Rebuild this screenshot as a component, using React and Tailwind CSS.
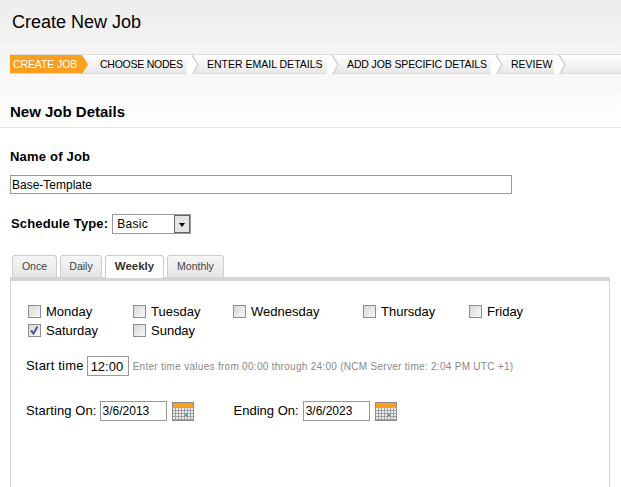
const steps = [
  { label: 'CHOOSE NODES', width: 'w-[107px] tracking-[-0.25px]' },
  { label: 'ENTER EMAIL DETAILS', width: 'w-[140px]' },
  { label: 'ADD JOB SPECIFIC DETAILS', width: 'w-[164px] tracking-[-0.12px]' },
  { label: 'REVIEW', width: 'w-[63px]' },
];

const tabs = [
  { label: 'Once', width: 'w-[45px]' },
  { label: 'Daily', width: 'w-[42px]' },
  { label: 'Weekly', width: 'w-[59px]', active: true },
  { label: 'Monthly', width: 'w-[57px]' },
];

const days = [
  { label: 'Monday' },
  { label: 'Tuesday' },
  { label: 'Wednesday' },
  { label: 'Thursday' },
  { label: 'Friday' },
  { label: 'Saturday', checked: true },
  { label: 'Sunday' },
];

function Chevron() {
  return (
    <svg width="12" height="19" viewBox="0 0 12 19" className="absolute right-[-11px] top-0">
      <path d="M0 0 L5 0 L11 9.5 L5 19 L0 19 Z" fill="#fdfdfd" />
      <path d="M5 0 L11 9.5 L6 19" fill="none" stroke="#d2d2d2" strokeWidth="1.5" />
    </svg>
  );
}

function Checkbox({ checked }) {
  return (
    <span className="flex h-[13px] w-[13px] shrink-0 items-center justify-center border border-[#8e8e8e] bg-gradient-to-br from-[#d8d8d8] to-[#f8f8f8] p-0">
      {checked && (
        <svg width="11" height="11" viewBox="0 0 11 11">
          <path d="M2 5.5 L4.5 8.5 L8.5 1.5" fill="none" stroke="#4a5a9a" strokeWidth="2" />
        </svg>
      )}
    </span>
  );
}

function CalendarIcon() {
  return (
    <svg width="22" height="19" viewBox="0 0 22 19" className="block shrink-0">
      <rect x="0.5" y="0.5" width="21" height="18" fill="#ededed" stroke="#8c8c8c" />
      <rect x="1" y="1" width="20" height="5" fill="#f7a11e" />
      <path
        d="M1 8.5 H21 M1 11.5 H21 M1 14.5 H21 M1 17.5 H21 M3.5 6 V18 M6.5 6 V18 M9.5 6 V18 M12.5 6 V18 M15.5 6 V18 M18.5 6 V18"
        fill="none"
        stroke="#a0a0a0"
      />
      <rect x="13" y="12" width="2" height="2" fill="#2aa8e0" />
    </svg>
  );
}

export default function App() {
  return (
    <div className="h-[487px] w-[621px] overflow-hidden bg-white font-['Liberation_Sans',Arial,sans-serif] text-black">
      <div className="h-[128px] border-b border-[#e6e6e6] bg-gradient-to-b from-[#ededed] to-white">
        <h1 className="pl-[12px] pt-[11px] text-[18px] leading-[22px] font-normal">Create New Job</h1>

        {/* Wizard steps */}
        <div className="mt-[21px] ml-[10px] flex h-[20px] items-stretch whitespace-nowrap border-y border-[#dcdcdc] bg-gradient-to-b from-white to-[#e8e8e8] text-[10.5px] leading-[18px]">
          <div className="relative z-10 w-[71px] bg-[#fb9f1f] pl-[3px] tracking-[-0.1px] text-white">
            CREATE JOB
            <svg width="7" height="19" viewBox="0 0 7 19" className="absolute right-[-7px] top-0">
              <path d="M0 0 L1 0 L7 9.5 L1 19 L0 19 Z" fill="#fb9f1f" />
            </svg>
          </div>
          {steps.map((step) => (
            <div key={step.label} className={`relative pl-[19px] ${step.width}`}>
              {step.label}
              <Chevron />
            </div>
          ))}
        </div>

        <h2 className="pl-[10px] pt-[29px] text-[15px] leading-[18px] font-bold">New Job Details</h2>
      </div>

      <div className="pt-[21px] pl-[10px]">
        <div className="text-[13px] tracking-[0.2px] leading-[16px] font-bold">Name of Job</div>
        <input
          readOnly
          value="Base-Template"
          className="mt-[10px] block h-[19px] w-[502px] border border-[#999999] px-[1px] text-[12px] outline-none"
        />

        <div className="mt-[20px] flex items-center">
          <label className="pl-[1px] text-[13px] tracking-[0.15px] leading-[20px] font-bold">Schedule Type:</label>
          <div className="ml-[4px] flex h-[20px] w-[79px] items-center justify-between border border-[#999999] pl-[4px] text-[12px] tracking-[0.3px]">
            Basic
            <span className="flex h-[18px] w-[16px] items-center justify-center border border-[#666666] bg-[#e4e4e4]">
              <span className="mt-[1px] h-0 w-0 border-x-[3px] border-t-[4px] border-x-transparent border-t-black" />
            </span>
          </div>
        </div>

        <div className="mt-[21px] flex h-[22px] gap-[3px] pl-[2px]">
          {tabs.map((tab) => (
            <div
              key={tab.label}
              className={
                tab.active
                  ? `relative z-10 flex h-[23px] items-center justify-center rounded-t-[3px] border border-b-0 border-[#cccccc] bg-white text-[11.5px] font-bold text-[#333333] ${tab.width}`
                  : `flex h-[22px] items-center justify-center rounded-t-[3px] border border-b-0 border-[#cccccc] bg-gradient-to-b from-[#f6f6f6] to-[#e4e4e4] text-[10.5px] text-[#444444] ${tab.width}`
              }
            >
              {tab.label}
            </div>
          ))}
        </div>

        <div className="h-[300px] w-[600px] border-x border-t-[4px] border-[#d4d4d4] pt-[21px] pl-[17px] text-[13px]">
          <div className="grid grid-cols-[105px_100px_130px_106px_80px] auto-rows-[19px] items-center">
            {days.map((day) => (
              <div key={day.label} className="flex items-center gap-[5px]">
                <Checkbox checked={day.checked} />
                <span>{day.label}</span>
              </div>
            ))}
          </div>

          <div className="-ml-[2px] mt-[16px] flex h-[20px] items-center">
            <span className="tracking-[0.2px]">Start time</span>
            <input
              readOnly
              value="12:00"
              className="ml-[3px] h-[20px] w-[42px] border border-[#999999] px-[3px] text-[13px] outline-none"
            />
            <span className="ml-[4px] whitespace-nowrap text-[10px] tracking-[0.29px] text-[#888888]">
              Enter time values from 00:00 through 24:00 (NCM Server time: 2:04 PM UTC +1)
            </span>
          </div>

          <div className="-ml-[2px] mt-[25px] flex h-[20px] items-center">
            <span className="tracking-[0.1px]">Starting On:</span>
            <input
              readOnly
              value="3/6/2013"
              className="ml-[3px] h-[20px] w-[67px] border border-[#999999] px-[2px] text-[12px] outline-none"
            />
            <span className="ml-[5px]"><CalendarIcon /></span>
            <span className="ml-[40px]">Ending On:</span>
            <input
              readOnly
              value="3/6/2023"
              className="ml-[4px] h-[20px] w-[67px] border border-[#999999] px-[2px] text-[12px] outline-none"
            />
            <span className="ml-[5px]"><CalendarIcon /></span>
          </div>
        </div>
      </div>
    </div>
  );
}
